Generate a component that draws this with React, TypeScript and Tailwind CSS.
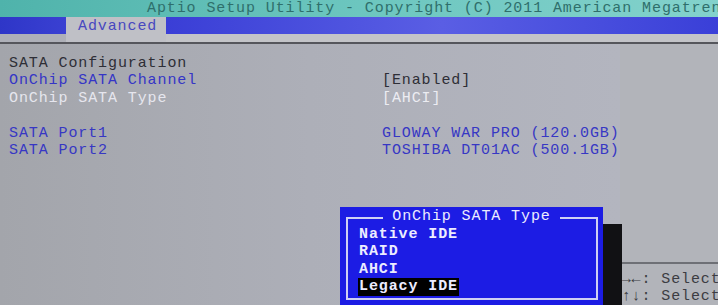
import React from "react";

const LEFT_ROWS = [
  { label: "SATA Configuration", value: "", tone: "text-[#2e2e36]" },
  { label: "OnChip SATA Channel", value: "[Enabled]", tone: "text-[#3535c6]", valueTone: "text-[#2e2e36]" },
  { label: "OnChip SATA Type", value: "[AHCI]", tone: "text-[#e6e6ee]", valueTone: "text-[#ececf2]" },
  { label: "", value: "", tone: "" },
  { label: "SATA Port1", value: "GLOWAY WAR PRO (120.0GB)", tone: "text-[#3737c4]", valueTone: "text-[#3737c4]" },
  { label: "SATA Port2", value: "TOSHIBA DT01AC (500.1GB)", tone: "text-[#3737c4]", valueTone: "text-[#3737c4]" },
];

const OPTIONS = ["Native IDE", "RAID", "AHCI", "Legacy IDE"];

export default function App() {
  return (
    <div className="relative w-[718px] h-[305px] overflow-hidden bg-[#aeb0b8] font-['Liberation_Mono',monospace] text-[15px] tracking-[0.9px]">
      {/* title strip */}
      <div className="h-[17px] leading-[17px] pl-[147px] whitespace-nowrap bg-linear-to-r from-[#4fb3ab] via-[#6cc6bf] to-[#83d2cc] text-[#2f6f6b]">
        Aptio Setup Utility - Copyright (C) 2011 American Megatrends, Inc.
      </div>

      {/* tab strip */}
      <div className="flex h-[25px]">
        <div className="w-[66px] h-[17px] bg-linear-to-r from-[#2e36c8] to-[#3a40d2]" />
        <div className="w-[100px] bg-[#bfc0c6] text-[#4848c0] pl-[12px] leading-[18px] pt-[1px]">Advanced</div>
        <div className="flex-1 flex flex-col">
          <div className="h-[17px] bg-linear-to-r from-[#3a3ed6] via-[#5a5ee4] to-[#3a3fd8]" />
          <div className="flex-1 bg-[#c3c4c8]" />
        </div>
      </div>
      <div className="h-[2px] bg-[#55565c]" />

      {/* body */}
      <div className="flex h-[261px]">
        <div className="w-[636px] pt-[11px] pl-[9px] bg-linear-to-r from-[#a3a5ab] via-[#adafb8] to-[#b3b5bf]">
          {LEFT_ROWS.map((row, i) => (
            <div key={i} className="flex h-[17.4px] leading-[17.4px] whitespace-nowrap">
              <span className={`w-[373px] ${row.tone}`}>{row.label}</span>
              <span className={row.valueTone}>{row.value}</span>
            </div>
          ))}
        </div>
        <div className="w-[2px] bg-[#1a1a1e]" />
        <div className="flex-1 flex flex-col bg-[#b2b4ba]">
          <div className="h-[218px]" />
          <div className="h-[2px] bg-[#6e7076]" />
          <div className="pl-[2px] pt-[8px] text-[#3c3c42] whitespace-nowrap leading-[16.5px]">
            <div>→←: Select Screen</div>
            <div>↑↓: Select Item</div>
          </div>
        </div>
      </div>

      {/* popup */}
      <div className="absolute left-[603px] top-[224px] w-[19px] h-[90px] bg-[#111114]" />
      <div className="absolute left-[340px] top-[207px] w-[263px] h-[105px] bg-[#1c1ce4] text-[#ececff]">
        <div className="absolute left-[6px] top-[10px] right-[5px] bottom-[12px] border-2 border-[#cfd0f4]" />
        <div className="absolute left-0 right-0 top-[1px] flex justify-center">
          <span className="bg-[#1c1ce4] px-[9px] leading-[17px]">OnChip SATA Type</span>
        </div>
        <div className="absolute left-[19px] top-[19px] flex flex-col">
          {OPTIONS.map((opt, i) => (
            <div
              key={opt}
              className={`h-[17.4px] leading-[17.4px] font-bold ${i === OPTIONS.length - 1 ? "bg-black px-[1px] -ml-[1px]" : ""}`}
            >
              {opt}
            </div>
          ))}
        </div>
      </div>
    </div>
  );
}
